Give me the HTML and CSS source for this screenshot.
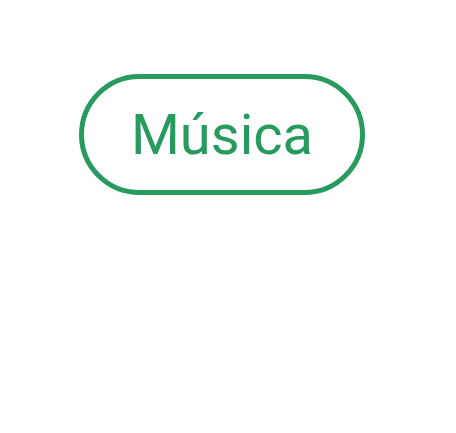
FILE: index.html
```html
<!DOCTYPE html>
<html>
<head>
<meta charset="utf-8">
<link rel="stylesheet" href="styles.css">
</head>
<body>
<div class="page">
  <button class="pill">Música</button>
</div>
</body>
</html>
```
FILE: styles.css
```css
html, body { margin: 0; padding: 0; background: #fff; }
.page { padding: 74px 0 0 79px; }
.pill {
  box-sizing: border-box;
  width: 286px;
  height: 121px;
  border: 5px solid #279a5e;
  border-radius: 61px;
  background: #fff;
  color: #279a5e;
  font-family: Roboto, sans-serif;
  font-size: 56px;
  font-weight: 400;
  display: flex;
  align-items: center;
  justify-content: center;
  padding: 0;
}
```
